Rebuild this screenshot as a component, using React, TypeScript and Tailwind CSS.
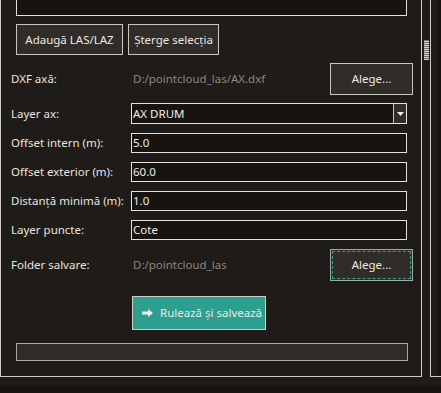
import React from "react";

const font = { fontFamily: '"Noto Sans", "Open Sans", sans-serif' };

function Field({ label, value }: { label: string; value: string }) {
  return (
    <div className="flex items-center h-[20px] mt-[9px]">
      <div className="w-[120px] text-[11.5px] text-[#e8e4de] whitespace-nowrap">{label}</div>
      <div className="w-[276px] h-[20px] bg-[#161311] border border-[#e4e0da] flex items-center px-[1px] text-[11.5px] text-[#f0ece6]">
        {value}
      </div>
    </div>
  );
}

function PickRow({ label, path, dashed }: { label: string; path: string; dashed?: boolean }) {
  return (
    <div className="flex items-center h-[32px]">
      <div className="w-[120px] text-[11.5px] text-[#e8e4de]">{label}</div>
      <div className="w-[199px] pl-[2px] text-[11.5px] text-[#8c8782] truncate">{path}</div>
      {dashed ? (
        <button className="w-[83px] h-[32px] bg-[#302c28] border border-[#a9a59f] p-[1px]">
          <div className="h-full border border-dashed border-[#2aa391] flex items-center justify-center text-[11.5px] text-[#ece8e2]">
            Alege...
          </div>
        </button>
      ) : (
        <button className="w-[83px] h-[32px] bg-[#302c28] border border-[#c9c5bf] text-[11.5px] text-[#ece8e2]">
          Alege...
        </button>
      )}
    </div>
  );
}

export default function App() {
  return (
    <div className="w-[441px] h-[393px] bg-[#1e1b18] overflow-hidden flex flex-col" style={font}>
      <div className="flex h-[377px]">
        {/* main panel */}
        <div className="w-[422px] h-[377px] border-l border-r border-b border-[#cfcbc5] bg-[#1e1b18] pl-[10px] flex flex-col">
          <div className="ml-[5px] w-[391px] h-[16px] bg-[#161311] border-l border-r border-b border-[#e4e0da]" />

          <div className="flex gap-[5px] ml-[5px] mt-[8px]">
            <button className="w-[107px] h-[31px] bg-[#302c28] border border-[#c9c5bf] text-[11.5px] text-[#ece8e2] whitespace-nowrap">
              Adaugă LAS/LAZ
            </button>
            <button className="w-[91px] h-[31px] bg-[#302c28] border border-[#c9c5bf] text-[11.5px] text-[#ece8e2] whitespace-nowrap">
              Șterge selecția
            </button>
          </div>

          <div className="mt-[8px]">
            <PickRow label="DXF axă:" path="D:/pointcloud_las/AX.dxf" />
          </div>

          <div className="flex items-center h-[21px] mt-[8px]">
            <div className="w-[120px] text-[11.5px] text-[#e8e4de]">Layer ax:</div>
            <div className="w-[276px] h-[21px] flex bg-[#161311] border border-[#e4e0da]">
              <div className="flex-1 flex items-center px-[1px] text-[11.5px] text-[#f0ece6]">AX DRUM</div>
              <div className="w-[13px] border-l border-[#c9c5bf] bg-[#302c28] flex items-center justify-center">
                <svg width="7" height="4" viewBox="0 0 7 4">
                  <path d="M0 0h7L3.5 4z" fill="#f0ece6" />
                </svg>
              </div>
            </div>
          </div>

          <Field label="Offset intern (m):" value="5.0" />
          <Field label="Offset exterior (m):" value="60.0" />
          <Field label="Distanță minimă (m):" value="1.0" />
          <Field label="Layer puncte:" value="Cote" />

          <div className="mt-[9px]">
            <PickRow label="Folder salvare:" path="D:/pointcloud_las" dashed />
          </div>

          <div className="mt-[15px] ml-[121px]">
            <button className="w-[134px] h-[34px] bg-[#2e9e8e] border border-[#cfcbc5] flex items-center gap-[7px] pl-[9px] text-[11.5px] text-[#e4ece6] whitespace-nowrap">
              <svg width="11" height="8" viewBox="0 0 11 8">
                <path d="M0 2.5h6V0l5 4-5 4V5.5H0z" fill="#f2efe9" />
              </svg>
              Rulează și salvează
            </button>
          </div>

          <div className="mt-[13px] ml-[5px] w-[392px] h-[18px] bg-[#302c28] border border-[#a9a59f]" />
        </div>

        {/* scrollbar */}
        <div className="w-[8px] h-[377px] flex justify-center">
          <div className="mt-[40px] w-[5px] h-[20px] flex flex-col">
            {Array.from({ length: 10 }).map((_, i) => (
              <div key={i} className="h-[2px] border-b border-[#d8d4ce] bg-[#6e6a65]" />
            ))}
          </div>
        </div>

        {/* neighbouring panel */}
        <div className="flex-1 h-[377px] border-l border-b border-[#cfcbc5] bg-[#1e1b18] flex justify-end">
          <div className="w-[4px] h-full bg-[#161311]" />
        </div>
      </div>
      <div className="h-[8px] bg-[#1e1b18]" />
      <div className="flex-1 bg-[#171412]" />
    </div>
  );
}
